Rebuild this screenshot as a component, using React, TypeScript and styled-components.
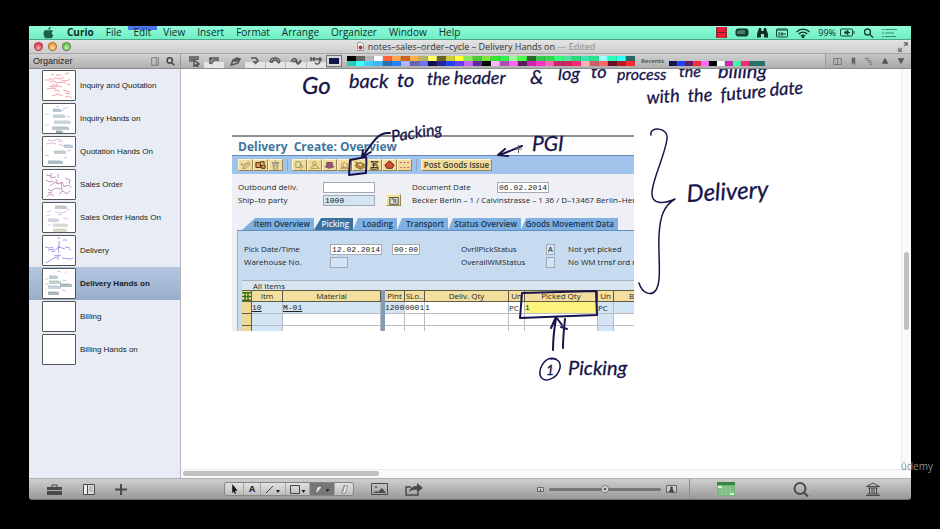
import React from "react";
import styled, { createGlobalStyle } from "styled-components";

const ui = '"Open Sans", "Noto Sans", sans-serif';
const helv = '"Liberation Sans", Arial, sans-serif';
const ink = "#17144a";

const Global = createGlobalStyle`
  * { box-sizing: border-box; }
  html, body, #root { height: 100%; }
  body { margin: 0; background: #000; overflow: hidden; }
  button, input { margin: 0; padding: 0; border: 0; background: none; font: inherit; color: inherit; border-radius: 0; }
  button { display: flex; align-items: center; justify-content: center; }
  svg { display: block; flex: none; }
`;

/* ---------- frame ---------- */

const Page = styled.div`
  position: relative;
  height: 100vh;
  padding: 26px 29px 29px;
  background: #000;
  font-family: ${ui};
`;

const Screen = styled.div`
  display: flex;
  flex-direction: column;
  height: 100%;
  overflow: hidden;
  border-radius: 0 0 3px 3px;
`;

const Watermark = styled.span`
  position: absolute;
  right: 7px;
  bottom: 56px;
  font: 10px/14px ${ui};
  color: #8d8d8d;
`;

/* ---------- menu bar ---------- */

const MenuBar = styled.nav`
  flex: none;
  display: flex;
  align-items: center;
  height: 14px;
  padding: 0 14px;
  background: linear-gradient(#8ffbd8, #70eec4);
  color: #0e3027;
  border-bottom: 1px solid #4ba68a;
`;

const MenuItem = styled.button<{ $bold?: boolean; $active?: boolean }>`
  height: 13px;
  margin-left: ${(p) => (p.$bold ? 7 : 0)}px;
  padding: 0 6px;
  font: ${(p) => (p.$bold ? 700 : 500)} 10px/13px ${ui};
  background: ${(p) => (p.$active ? "linear-gradient(#4b74ef 0 4px, transparent 4px)" : "none")};
`;

const StatusArea = styled.div`
  display: flex;
  align-items: center;
  gap: 8px;
  margin-left: auto;
`;

const Percent = styled.span`
  font: 9px/13px ${ui};
  margin-right: -4px;
`;

/* ---------- title bar ---------- */

const TitleBar = styled.header`
  flex: none;
  display: grid;
  grid-template-columns: 1fr auto 1fr;
  align-items: center;
  height: 13px;
  padding: 0 3px 0 5px;
  background: linear-gradient(#e4e4e4, #cdcdcd);
`;

const Lights = styled.div`
  display: flex;
  gap: 5px;
`;

const Light = styled.button<{ $tone: string }>`
  width: 9px;
  height: 9px;
  border-radius: 50%;
  border: 1px solid rgba(60, 40, 40, 0.45);
  background: radial-gradient(circle at 50% 70%, rgba(255, 255, 255, 0.6), transparent 60%), ${(p) => p.$tone};
`;

const Title = styled.h1`
  display: flex;
  align-items: center;
  gap: 4px;
  margin: 0 0 0 10px;
  font: 500 9px/13px ${ui};
  color: #333;
  white-space: pre;
  span { color: #8e8e8e; }
`;

const Expand = styled.button`
  justify-self: end;
`;

/* ---------- toolbar ---------- */

const Toolbar = styled.div`
  flex: none;
  display: flex;
  height: 16px;
  background: linear-gradient(#d2d2d2, #b0b0b0);
  border-top: 1px solid #a8a8a8;
  border-bottom: 1px solid #8c8c8c;
`;

const OrganizerHead = styled.div`
  display: flex;
  align-items: center;
  gap: 7px;
  width: 152px;
  padding: 0 5px 0 4px;
  border-right: 1px solid #999;
  font: 9px/14px ${helv};
  color: #222;
  span { margin-right: auto; }
`;

const Tools = styled.div`
  display: flex;
  align-items: center;
  gap: 1px;
  padding-left: 3px;
  width: 145px;
`;

const Tool = styled.button<{ $lit?: boolean }>`
  flex: 1;
  height: 14px;
  background: ${(p) => (p.$lit ? "linear-gradient(transparent 8px, #e4e4e4 8px)" : "none")};
`;

const ColorWell = styled.button`
  align-self: center;
  width: 16px;
  height: 12px;
  border: 1px solid #777;
  background: #14144f;
  box-shadow: inset 0 0 0 2px #d8d8d8;
`;

const Palette = styled.div<{ $cols: number; $cell: number; $rows: number }>`
  display: grid;
  grid-template-columns: repeat(${(p) => p.$cols}, ${(p) => p.$cell}px);
  grid-auto-rows: 5px;
  align-self: ${(p) => (p.$rows === 2 ? "center" : "end")};
  margin: 0 0 ${(p) => (p.$rows === 2 ? 0 : 2)}px 5px;
`;

const Swatch = styled.button<{ $c: string }>`
  background: ${(p) => p.$c};
  box-shadow: inset -1px 0 rgba(80, 80, 80, 0.2);
`;

const Recents = styled.span`
  align-self: center;
  margin-left: 6px;
  font: 600 6px/8px ${ui};
  color: #444;
`;

const ViewTools = styled.div`
  display: flex;
  align-items: center;
  justify-content: space-around;
  width: 86px;
  margin-left: auto;
  padding: 0 2px 0 3px;
  border-left: 1px solid #989898;
  background: linear-gradient(#c4c4c4, #a8a8a8);
`;

/* ---------- body ---------- */

const Body = styled.div`
  flex: 1;
  min-height: 0;
  display: flex;
`;

const Sidebar = styled.ul`
  flex: none;
  width: 152px;
  margin: 0;
  padding: 0;
  list-style: none;
  background: #e8edf5;
  border-right: 1px solid #b4b8be;
  overflow: hidden;
`;

const SideRow = styled.button<{ $on?: boolean }>`
  width: 100%;
  height: 33px;
  justify-content: flex-start;
  gap: 4px;
  padding-left: 13px;
  font: ${(p) => (p.$on ? 700 : 400)} 8px/12px ${helv};
  color: #191b20;
  background: ${(p) => (p.$on ? "linear-gradient(#b3c7df, #97aecb)" : "none")};
`;

const Thumb = styled.svg`
  width: 34px;
  height: 31px;
  border: 1px solid #555;
  border-radius: 1px;
  background: #fff;
`;

const Board = styled.main`
  flex: 1;
  min-width: 0;
  display: grid;
  grid-template-columns: 1fr 10px;
  grid-template-rows: 1fr 9px;
  background: #fff;
`;

const Canvas = styled.div`
  position: relative;
  overflow: hidden;
`;

const InkLayer = styled.svg`
  position: absolute;
  left: 0;
  top: 0;
`;

const InkText = styled.text<{ $size: number }>`
  font: italic 400 ${(p) => p.$size}px Lato, sans-serif;
  fill: ${ink};
  stroke: ${ink};
  stroke-width: 0.3px;
`;

const VTrack = styled.div`
  border-left: 1px solid #ececec;
  padding: 183px 2px 0;
  background: #fafafa;
`;

const HTrack = styled.div`
  grid-column: 1 / -1;
  border-top: 1px solid #ececec;
  padding: 1px 2px 0;
  background: #fafafa;
`;

const ScrollThumb = styled.div<{ $across?: boolean }>`
  width: ${(p) => (p.$across ? "27%" : "5px")};
  height: ${(p) => (p.$across ? 5 : 78)}px;
  border-radius: 3px;
  background: #c0c0c0;
`;

/* ---------- delivery form ---------- */

const Sap = styled.section`
  position: absolute;
  left: 51px;
  top: 66px;
  width: 402px;
  height: 196px;
  overflow: hidden;
  border-top: 2px solid #8d9095;
  background: #eef0f6;
  font: 500 8px/12px ${ui};
  color: #1c1f26;
`;

const SapTitle = styled.h2`
  margin: 0;
  padding: 0 6px;
  height: 19px;
  background: #fdfdfe;
  border-bottom: 1px solid #6489b2;
  font: 700 12px/19px ${ui};
  color: #41759f;
  white-space: pre;
`;

const SapBar = styled.div`
  display: flex;
  align-items: center;
  height: 18px;
  padding-left: 6px;
  background: #a1c4ec;
`;

const SapGroup = styled.div`
  display: flex;
  padding-right: 4px;
  margin-right: 4px;
  border-right: 1px solid #86a5c8;
`;

const SapButton = styled.button`
  width: 15px;
  height: 12px;
  border: 1px solid;
  border-color: #fff3c9 #94845a #94845a #fff3c9;
  background: #f1dc9a;
`;

const PostButton = styled(SapButton)`
  width: 71px;
  font-weight: 600;
  line-height: 10px;
  color: #3d3b30;
  white-space: nowrap;
`;

const FormGrid = styled.div<{ $cols: string; $pad: string }>`
  display: grid;
  grid-template-columns: ${(p) => p.$cols};
  grid-auto-rows: 12px;
  row-gap: 1px;
  align-items: center;
  padding: ${(p) => p.$pad};
  white-space: nowrap;
`;

const Field = styled.input<{ $w: number; $plain?: boolean }>`
  width: ${(p) => p.$w}px;
  height: 11px;
  padding: 0 1px;
  border: 1px solid #a2abb5;
  background: ${(p) => (p.$plain ? "#d3e5f4" : "#fff")};
  font: 400 8px/9px "Liberation Mono", monospace;
  color: #222;
`;

const Rest = styled.span`
  grid-column: 4 / -1;
`;

const Tabs = styled.div`
  display: flex;
  height: 12px;
  margin-top: 12px;
  padding-left: 10px;
`;

const Tab = styled.button<{ $w: number; $on?: boolean; $slant: number }>`
  flex: none;
  width: ${(p) => p.$w}px;
  height: 12px;
  justify-content: flex-end;
  padding-right: 4px;
  font: 600 8px/12px ${ui};
  white-space: nowrap;
  color: ${(p) => (p.$on ? "#e8f1fa" : "#1c3450")};
  background: ${(p) => (p.$on ? "#3d719f" : "#7eb1e2")};
  clip-path: polygon(${(p) => p.$slant}px 0, 100% 0, 100% 100%, 0 100%);
`;

const TabPanel = styled.div`
  margin-left: 5px;
  height: 101px;
  border-top: 1px solid #5f8fbe;
  border-left: 1px solid #8fb4d8;
  background: #c6daf0;
`;

const Caption = styled.div`
  margin: 12px 0 0 4px;
  padding-left: 11px;
  height: 10px;
  border-top: 1px solid #9fb3c4;
  background: #d8e5f0;
  line-height: 9px;
`;

const Items = styled.table`
  margin-left: 4px;
  width: 408px;
  table-layout: fixed;
  border-collapse: separate;
  border-spacing: 0;
  background: #fff;
  th, td { padding: 0; overflow: hidden; white-space: nowrap; }
  td { height: 12px; }
`;

const Head = styled.th`
  height: 12px;
  border: 1px solid #5e5a48;
  border-left-width: 0;
  background: #f3de9e;
  font: 500 8px/10px ${ui};
  text-align: center;
`;

const Rail = styled.td`
  background: #7f9cba;
`;

const Cell = styled.td<{ $tone?: "blue" | "yellow" | "pick" }>`
  border-right: 1px solid #b9bdc2;
  border-bottom: 1px solid #b9bdc2;
  font: 400 8px/11px "Liberation Mono", monospace;
  color: #222;
  background: ${(p) => ({ blue: "#d3e5f5", yellow: "#fdf37c", pick: "#efd88f", none: "#fff" })[p.$tone ?? "none"]};
  a { color: inherit; }
`;

const PickCell = styled(Cell)`
  border-right-color: #5e5a48;
  border-bottom-color: #5e5a48;
`;

const Unit = styled(Cell)`
  font: 500 8px/11px ${ui};
`;

/* ---------- footer ---------- */

const Footer = styled.footer`
  flex: none;
  display: flex;
  align-items: center;
  height: 22px;
  background: linear-gradient(#cfcfcf, #989898);
  border-top: 1px solid #b0b0b0;
  border-bottom: 1px solid #6d7478;
  color: #4a4a4a;
`;

const FootLeft = styled.div`
  display: flex;
  align-items: center;
  justify-content: space-between;
  width: 98px;
  padding-left: 18px;
`;

const Segments = styled.div`
  display: flex;
  height: 14px;
  margin-left: 97px;
  border: 1px solid #858585;
  border-radius: 3px;
  background: linear-gradient(#e2e2e2, #bcbcbc);
  overflow: hidden;
`;

const Segment = styled.button<{ $w: number; $on?: boolean }>`
  width: ${(p) => p.$w}px;
  font: 700 9px/12px ${ui};
  color: #222;
  border-right: 1px solid #a5a5a5;
  background: ${(p) => (p.$on ? "#777" : "none")};
  &:last-child { border-right: 0; }
`;

const FootButton = styled.button`
  margin-left: 17px;
`;

const Zoom = styled.label`
  display: flex;
  align-items: center;
  gap: 5px;
  margin-left: auto;
  padding-right: 12px;
`;

const Range = styled.input`
  appearance: none;
  width: 112px;
  height: 8px;
  &::-webkit-slider-runnable-track { height: 3px; border-radius: 2px; background: #767676; }
  &::-webkit-slider-thumb {
    appearance: none; width: 8px; height: 8px; margin-top: -3px; border-radius: 50%;
    background: radial-gradient(circle, #555 0 1px, #f2f2f2 2px); border: 1px solid #777;
  }
`;

const FootRight = styled.div`
  display: flex;
  align-items: center;
  justify-content: space-between;
  align-self: stretch;
  width: 222px;
  padding: 0 31px 0 27px;
  border-left: 1px solid #8f8f8f;
`;

/* ---------- data ---------- */

const menus = ["File", "Edit", "View", "Insert", "Format", "Arrange", "Organizer", "Window", "Help"];

const palette =
  "000 666 b5b5b5 fff ff6238 ffa64d cc6626 ffb347 b3b36b ffff66 66662b cccc33 ffff33 8ce65c 4dcc33 7de645 33e633 33f04d a0f5a0 4dff4d 2b662b 33cc4d 33d94d 33ff7d 4de69c 26d97d 33e6b3 26e68c 99ffff 26ffc0 33ffff 26665f 2bccb3 40ffff 40ccff 40b3ff 2673b3 2680ff b3b3ff 6666b3 7070f8 101050 262699 2040ff 6640ff c466ff 6626a6 000 ffb3ff b34db3 ff66ff 5c1a5c cc26b3 ff33cc ff66b3 cc2666 cc265c ff2673 ffb3b3 cc5c66 ff6666 661020 b81a26 ff2633".split(" ");
const recent = "14144f 2040ff 661a66 ff2640 ff66ff 000 fff cc26b3 33ffa6 ff2673 267366 267366".split(" ");

type Mark = [number, number, number, string];
const pages: { name: string; kind: string }[] = [
  { name: "Inquiry and Quotation", kind: "red" },
  { name: "Inquiry Hands on", kind: "shots" },
  { name: "Quotation Hands On", kind: "shots2" },
  { name: "Sales Order", kind: "plum" },
  { name: "Sales Order Hands On", kind: "shots3" },
  { name: "Delivery", kind: "violet" },
  { name: "Delivery Hands on", kind: "shots4" },
  { name: "Billing", kind: "" },
  { name: "Billing Hands on", kind: "" },
];

const blocks: Record<string, Mark[]> = {
  shots: [[10, 5, 8, "#9db4c5"], [10, 11, 12, "#b4c4cc"], [11, 17, 17, "#b9cbd2"], [9, 23, 17, "#a5b6c0"], [13, 27, 7, "#8895a0"]],
  shots2: [[21, 8, 9, "#a7b8cc"], [11, 14, 12, "#b0bfca"], [5, 24, 15, "#96a8b4"]],
  shots3: [[12, 3, 12, "#b4bbb8"], [5, 16, 11, "#c5c8d4"], [10, 21, 15, "#ccd3cc"], [10, 26, 14, "#cfcfb8"]],
  shots4: [[6, 7, 9, "#a4bccc"], [6, 12, 12, "#a9c6b9"], [5, 17, 13, "#b3c4cf"], [17, 15, 12, "#92a8b0"], [5, 23, 11, "#8da0b0"]],
};

const scrawl: Record<string, [string, string]> = {
  red: ["#f58a97", "M2 9h5M6 7l3 2 3-2 5 1 4-2M8 4l3-1M13 4h5M22 3l4-1M7 11l4-1 3 2 4-1 5 1M6 15l5 1 4-1 4 1M18 9l6 1 3-2M4 18l6-1 3 1M11 20l4-1 2 2M20 19l4 1 3 1M9 25l6-2 5 2M22 22l5 1M22 26l4-1 3 2M9 14h6M24 13l3 1"],
  plum: ["#b67ab2", "M3 5l5 1M8 3v5l5-1M15 4v4M3 10l4 2 3-1M7 16l5-4 3 2M13 9l2 5 4-2 2 4M5 19l3 2 5-3M18 12l1 9M20 17l6-2 2 3M4 26l4-2 3 2M16 24l4-3 4 3M22 8l5 2-1 4M23 24l4-3M5 23l4-1M13 18l5 1"],
  violet: ["#8b83e4", "M14 2h3M16 5v7M20 4h4M2 11l4 1 4-1M5 14l6-1M11 15l5-4 6 2M15 10l1 7M22 11l5 1M26 13l2 1M11 20l4-1 3 1M15 19v5M3 27l8-5 4-1M19 22l8 1 3-1M8 15l4 1"],
  shots: ["#c3bde0", "M2 10h4M20 5l5-2M2 21h4M18 7l3-1M13 2l3 1M23 12l4 1"],
  shots2: ["#d6a8cd", "M5 3l5 1 4-2 6 2M3 7l6-1 4 1M16 7l5 2M2 18l4 1M24 14l4-1M21 21l3-1M15 5l3-1"],
  shots3: ["#d4b6dc", "M4 9l4-1M12 9l7 1 5-2M3 13l4-1M20 15l5 1M5 22h3M15 12l4-1M24 6l3 1"],
  shots4: ["#c4b9d0", "M14 2l4 1M2 10h3M2 15h3M19 11l5 1M19 21l4 1M22 4l2-2M2 21l2-1"],
};

const tabs: [string, number, number][] = [
  ["Item Overview", 72, 13],
  ["Picking", 39, 7],
  ["Loading", 44, 5],
  ["Transport", 51, 5],
  ["Status Overview", 73, 5],
  ["Goods Movement Data", 97, 5],
];

const ThumbArt = ({ kind }: { kind: string }) => (
  <Thumb viewBox="0 0 32 29" aria-hidden="true">
    {(blocks[kind] ?? []).map(([x, y, w, c], i) => (
      <g key={i}>
        <rect x={x} y={y} width={w} height={3} fill={c} opacity=".75" />
        <path d={`M${x} ${y}h${w - 2}`} stroke={c} strokeWidth=".8" />
      </g>
    ))}
    {scrawl[kind] && <path d={scrawl[kind][1]} fill="none" stroke={scrawl[kind][0]} strokeWidth=".8" />}
  </Thumb>
);

/* Small outline icon on a 12-unit grid */
const Icon = ({ d, w = 10, h = 10, fill = "none", stroke = "currentColor", sw = 1 }: { d: string; w?: number; h?: number; fill?: string; stroke?: string; sw?: number }) => (
  <svg width={w} height={h} viewBox="0 0 12 12" preserveAspectRatio="none" fill={fill} stroke={stroke} strokeWidth={sw} aria-hidden="true">
    <path d={d} />
  </svg>
);

const toolIcons: [string, string, boolean][] = [
  ["Select", "M1 2h10M1 4h10M1 6h4M6 5l5 4-2 .5 1 2-1 .5-1-2-2 1z", false],
  ["Line style", "M2 9V3h9M3 9l3-4h5M2 3l2 2", true],
  ["Pen", "M2 10l2-5 4-2 3 1-2 4-3 1zM4 6h5M5 5h5", false],
  ["Note", "M2 3h5l2 3-3 3M4 7h4", true],
  ["Rotate", "M1 7a5 4 0 0 1 10 0M3 8a3 3 0 0 1 6 0M1 7h2M9 8l2-1", true],
  ["Curve", "M1 7c3-6 6-3 6 0s2 2 4-1M3 7l2-1 3 3 3-4", true],
  ["Connect", "M1 2v4M1 4h9M4 2v4M10 3v3c0 3-3 4-5 2M8 5l2-2 2 2", true],
];

const sapIcons: { d: string; c: string; fill?: string }[] = [
  { d: "M1 4l3 2 6-4M3 10l6-6 2 1-5 5zM1 5l3 3", c: "#9c8c61" },
  { d: "M1 3h5v6H1zM7 6h4v4H7zM6 2h4v3", c: "#33281f", fill: "#ec9230" },
  { d: "M3 4h6l-1 7H4zM2 3h8M5 1h2M5 5v4M7 5v4", c: "#8b8b83" },
  { d: "M2 2h5v7H2zM6 6l4 2-3 3M8 4v3", c: "#8e966a" },
  { d: "M6 2a2 2 0 1 1 0 4a2 2 0 1 1 0-4M2 10l3-4h3l3 4z", c: "#a6904f" },
  { d: "M3 7V3h6v4M1 8l5 2 5-2-5-2z", c: "#4e5277", fill: "#bc4763" },
  { d: "M3 9V5l3-2 3 2v4zM1 10h10M5 6v3", c: "#b7876c" },
  { d: "M2 5l5-2 4 2v4l-4 2-5-3zM2 5l5 3 4-3M1 2l4 2", c: "#6d642f", fill: "#d58b31" },
  { d: "M2 2h8l-2 2H5zM3 6h6M2 9h8v2H2zM5 4v5M9 6v2", c: "#24241e" },
  { d: "M6 1l5 5-2 4H3L1 6z", c: "#51221c", fill: "#d84b2f" },
  { d: "M1 3h2M5 3h2M9 3h2M1 9h2M5 9h2M9 9h2", c: "#bd486d" },
];

/* ---------- app ---------- */

export default function App() {
  return (
    <Page>
      <Global />
      <Screen>
        <MenuBar>
          <svg width="11" height="12" viewBox="0 0 11 12" fill="#205e4c" aria-hidden="true">
            <path d="M7.6 0C6 .3 5.200 1.300 5.300 2.800 6.900 2.800 7.700 1.600 7.600 0zM5.500 3.500C4.500 3.500 4 3 3 3.100 1.200 3.300.4 4.800.5 6.700c.1 2 1.500 4.700 2.800 4.700.8 0 1.200-.5 2.200-.5s1.400.5 2.200.5c1.200 0 2.200-1.800 2.600-3.100C8.400 7.500 8.200 4.900 10 4c-1.400-1.500-3.400-.9-4.500-.5z" />
          </svg>
          <MenuItem $bold>Curio</MenuItem>
          {menus.map((m) => (
            <MenuItem key={m} $active={m === "Edit"}>{m}</MenuItem>
          ))}
          <StatusArea>
            <svg width="11" height="11" viewBox="0 0 11 11" aria-hidden="true">
              <path fill="#75202b" d="M0 0h11v11H0z" /><path fill="#ee1f37" d="M2 0h7v5H2zM2 6h7v5H2z" />
              <path stroke="#d06070" strokeDasharray="1 1" d="M1 0v11M10 0v11" />
            </svg>
            <svg width="14" height="9" viewBox="0 0 14 9" aria-hidden="true">
              <rect x="1" y="1" width="12" height="7" rx="2" fill="#16443a" stroke="#102f28" />
              <path stroke="#7ed9bc" d="M4 3h6M4 5h6M3 3v3" strokeWidth=".8" />
            </svg>
            <svg width="11" height="10" viewBox="0 0 11 10" fill="#102f28" aria-hidden="true">
              <path d="M2 0h2l.6 3h1.800L7 0h2l2 6v3.500H7V6H4v3.500H0V6z" />
            </svg>
            <svg width="12" height="10" viewBox="0 0 12 10" fill="none" stroke="#16443a" aria-hidden="true">
              <rect x=".5" y="1" width="11" height="8" rx="1" /><path d="M0 2h12M3 4v4M5 5h2v2H5zM9 5v2" />
            </svg>
            <svg width="14" height="10" viewBox="0 0 14 10" fill="none" stroke="#102f28" strokeWidth="1.300" aria-hidden="true">
              <path d="M.5 4C4 .2 10 .2 13.500 4M2.700 6C5.200 3.500 8.800 3.500 11.300 6M4.900 8C6 6.800 8 6.800 9.100 8" /><circle cx="7" cy="9" r=".6" />
            </svg>
            <Percent>99%</Percent>
            <svg width="15" height="9" viewBox="0 0 15 9" fill="none" stroke="#16443a" aria-hidden="true">
              <rect x=".5" y="1" width="12" height="7" rx="1" /><path d="M14 3v3" /><path fill="#16443a" d="M8 2.500v4L4 4.500zM8 4.500h2" />
            </svg>
            <svg width="11" height="10" viewBox="0 0 11 10" fill="none" stroke="#16443a" strokeWidth="1.400" aria-hidden="true">
              <circle cx="4.500" cy="4" r="3" /><path d="M7 6.500l3 3" />
            </svg>
            <svg width="15" height="10" viewBox="0 0 15 10" fill="none" stroke="#3d8c75" strokeWidth="1.200" aria-hidden="true">
              <path d="M0 1.500h2M3 1.500h12M0 5h2M3 5h9M0 8.500h2M3 8.500h11" />
            </svg>
          </StatusArea>
        </MenuBar>

        <TitleBar>
          <Lights>
            <Light aria-label="Close" $tone="#ea4455" />
            <Light aria-label="Minimize" $tone="#f2a73a" />
            <Light aria-label="Zoom window" $tone="#6fca57" />
          </Lights>
          <Title>
            <svg width="7" height="9" viewBox="0 0 7 9" aria-hidden="true">
              <path d="M.5.5h4l2 2v6h-6z" fill="#f3f3f3" stroke="#999" /><circle cx="3.500" cy="5.500" r="2" fill="#ab3833" />
            </svg>
            <div>notes–sales–order–cycle – Delivery Hands on <span>— Edited</span></div>
          </Title>
          <Expand aria-label="Full screen"><Icon d="M7 1h4v4M11 1L7 5M1 7v4h4M1 11l4-4" stroke="#666" w={10} h={10} sw={1.4} /></Expand>
        </TitleBar>

        <Toolbar>
          <OrganizerHead>
            <span>Organizer</span>
            <button aria-label="Show panel"><Icon d="M1 1h10v10H1zM8 1v10" w={8} h={9} stroke="#666" /></button>
            <button aria-label="Search pages"><Icon d="M5 1a3.500 3.500 0 1 1 0 7a3.500 3.500 0 1 1 0-7M8 8l3 3" w={9} h={9} stroke="#444" sw={2} /></button>
          </OrganizerHead>
          <Tools>
            {toolIcons.map(([n, d, lit]) => (
              <Tool key={n} aria-label={n} $lit={lit}><Icon d={d} w={12} h={12} stroke="#555" sw={1.5} /></Tool>
            ))}
          </Tools>
          <ColorWell aria-label="Pen color" />
          <Palette $cols={32} $cell={9} $rows={2}>
            {palette.map((c, i) => <Swatch key={i} aria-label={`Color ${i + 1}`} $c={`#${c}`} />)}
          </Palette>
          <Recents>Recents</Recents>
          <Palette $cols={12} $cell={8} $rows={1}>
            {recent.map((c, i) => <Swatch key={i} aria-label={`Recent color ${i + 1}`} $c={`#${c}`} />)}
          </Palette>
          <ViewTools>
            <button aria-label="Split view"><Icon d="M1 2h10v8H1zM6 2v8" w={9} h={9} stroke="#666" /></button>
            <button aria-label="Bookmark"><Icon d="M3 1h6v10L6 8l-3 3z" w={7} h={9} fill="#666" stroke="none" /></button>
            <button aria-label="Outline"><Icon d="M1 2h5M3 5h6M6 8h5M7 11h4" w={9} h={8} stroke="#777" sw={1.5} /></button>
            <button aria-label="Previous page"><Icon d="M6 1l5 9H1z" w={8} h={8} fill="#555" stroke="none" /></button>
            <button aria-label="Next page"><Icon d="M1 2h10l-5 9z" w={8} h={8} fill="#555" stroke="none" /></button>
          </ViewTools>
        </Toolbar>

        <Body>
          <Sidebar>
            {pages.map((p) => (
              <li key={p.name}>
                <SideRow $on={p.name === "Delivery Hands on"}><ThumbArt kind={p.kind} />{p.name}</SideRow>
              </li>
            ))}
          </Sidebar>

          <Board>
            <Canvas>
              <Sap>
                <SapTitle>Delivery  Create: Overview</SapTitle>
                <SapBar>
                  <SapGroup>
                    {sapIcons.slice(0, 3).map((s, i) => (
                      <SapButton key={i} aria-label={`Header action ${i + 1}`}><Icon d={s.d} stroke={s.c} fill={s.fill} w={11} h={10} /></SapButton>
                    ))}
                  </SapGroup>
                  <SapGroup>
                    {sapIcons.slice(3).map((s, i) => (
                      <SapButton key={i} aria-label={`Item action ${i + 1}`}><Icon d={s.d} stroke={s.c} fill={s.fill} w={11} h={10} /></SapButton>
                    ))}
                  </SapGroup>
                  <PostButton>Post Goods Issue</PostButton>
                </SapBar>
                <FormGrid $cols="85px 63px 26px 85px 1fr" $pad="7px 0 0 6px">
                  <label htmlFor="outbound">Outbound deliv.</label>
                  <Field id="outbound" $w={52} />
                  <span />
                  <label htmlFor="docdate">Document Date</label>
                  <Field id="docdate" $w={52} defaultValue="06.02.2014" />
                  <label htmlFor="shipto">Ship–to party</label>
                  <Field id="shipto" $w={52} $plain defaultValue="1000" />
                  <SapButton aria-label="Partner details"><Icon d="M1 2h10v9H1zM3 4h3v5M8 4v5" w={10} h={9} stroke="#333" fill="#dce0d4" /></SapButton>
                  <Rest>Becker Berlin – 1 / Calvinstrasse – 1 36 / D–13467 Berlin–Her</Rest>
                </FormGrid>
                <Tabs>
                  {tabs.map(([name, w, slant]) => <Tab key={name} $w={w} $slant={slant} $on={name === "Picking"}>{name}</Tab>)}
                </Tabs>
                <TabPanel>
                  <FormGrid $cols="86px 62px 69px 85px 22px 1fr" $pad="12px 0 0 6px">
                    <label htmlFor="pickdate">Pick Date/Time</label>
                    <Field id="pickdate" $w={52} defaultValue="12.02.2014" />
                    <Field aria-label="Pick time" $w={28} defaultValue="00:00" />
                    <label htmlFor="pickst">OvrllPickStatus</label>
                    <Field id="pickst" $w={9} $plain defaultValue="A" />
                    <span>Not yet picked</span>
                    <label htmlFor="wh">Warehouse No.</label>
                    <Field id="wh" $w={18} $plain />
                    <span />
                    <label htmlFor="wmst">OverallWMStatus</label>
                    <Field id="wmst" $w={9} $plain />
                    <span>No WM trnsf ord re</span>
                  </FormGrid>
                  <Caption>All Items</Caption>
                  <Items>
                    <colgroup>
                      {[10, 31, 98, 4, 20, 20, 84, 16, 73, 16, 36].map((w, i) => <col key={i} width={w} />)}
                    </colgroup>
                    <thead>
                      <tr>
                        <Head aria-label="Select all"><Icon d="M0 1h12M0 6h12M0 11h12M4 0v12M8 0v12" w={9} h={9} stroke="#39721f" fill="none" sw={2} /></Head>
                        <Head>Itm</Head>
                        <Head>Material</Head>
                        <Rail />
                        <Head>Plnt</Head>
                        <Head>SLo..</Head>
                        <Head>Deliv. Qty</Head>
                        <Head>Un</Head>
                        <Head>Picked Qty</Head>
                        <Head>Un</Head>
                        <Head>B</Head>
                      </tr>
                    </thead>
                    <tbody>
                      <tr>
                        <PickCell $tone="pick" />
                        <Cell $tone="blue"><a href="#item">10</a></Cell>
                        <Cell $tone="blue"><a href="#material">M-01</a></Cell>
                        <Rail />
                        <Cell $tone="blue">1200</Cell>
                        <Cell>0001</Cell>
                        <Cell>1</Cell>
                        <Unit>PC</Unit>
                        <Cell $tone="yellow">1</Cell>
                        <Unit $tone="blue">PC</Unit>
                        <Cell $tone="blue" />
                      </tr>
                      {[0, 1].map((r) => (
                        <tr key={r}>
                          <PickCell $tone="pick" />
                          <Cell $tone="blue" />
                          <Cell />
                          <Rail />
                          <Cell /><Cell /><Cell /><Cell /><Cell />
                          <Cell $tone="blue" />
                          <Cell />
                        </tr>
                      ))}
                    </tbody>
                  </Items>
                </TabPanel>
              </Sap>

              <InkLayer width="720" height="400" viewBox="181 69 720 400">
                <InkText x="302" y="94" $size={24}>Go</InkText>
                <InkText x="349" y="88" $size={20}>back</InkText>
                <InkText x="397" y="87" $size={20}>to</InkText>
                <InkText x="427" y="85" $size={17}>the</InkText>
                <InkText x="454" y="84" $size={18}>header</InkText>
                <InkText x="530" y="84" $size={20}>&amp;</InkText>
                <InkText x="558" y="80" $size={18}>log</InkText>
                <InkText x="591" y="78" $size={18}>to</InkText>
                <InkText x="617" y="80" $size={16}>process</InkText>
                <InkText x="679" y="77" $size={16}>the</InkText>
                <InkText x="718" y="78" $size={20}>billing</InkText>
                <InkText $size={18} transform="translate(647 104) rotate(-4)">with</InkText>
                <InkText $size={18} transform="translate(688 102) rotate(-3)">the</InkText>
                <InkText $size={18} transform="translate(721 101) rotate(-5)">future</InkText>
                <InkText $size={18} transform="translate(770 96) rotate(-4)">date</InkText>
                <InkText $size={16} transform="translate(392 142) rotate(-9)">Packing</InkText>
                <InkText x="532" y="151" $size={21}>PGI</InkText>
                <InkText $size={24} transform="translate(687 202) rotate(-3)">Delivery</InkText>
                <InkText x="568" y="375" $size={20}>Picking</InkText>
                <InkText x="546" y="375" $size={14}>1</InkText>
                <g fill="none" stroke={ink} strokeWidth="2" strokeLinecap="round" strokeLinejoin="round">
                  <path strokeWidth="1.500" d="M651 135C649 126 669 127 667 139C665 155 653 178 652 192C651 205 664 204 675 199C663 206 660 218 659 235C658 256 662 281 656 290C651 297 642 293 639 283" />
                  <path d="M390 133C380 132 376 137 363 156M363 150L362 157L371 152" />
                  <path d="M350 160L366 157C367 162 366 169 366 173L349 175Z" />
                  <path d="M522 146L500 155M505 149L498 155L508 156" />
                  <path d="M522 293L596 291L597 315L520 318Z" />
                  <path d="M553 350C553 340 554 330 556 318M551 328L556 317L562 325M563 348C563 338 564 328 565 319M561 327L567 329" />
                  <path strokeWidth="1.500" d="M556 359C546 355 539 367 540 375C542 384 557 380 560 368C561 361 556 358 551 359" />
                </g>
                <path stroke="#666" fill="none" d="M515 149h7M518.500 145v8" />
              </InkLayer>
            </Canvas>
            <VTrack><ScrollThumb /></VTrack>
            <HTrack><ScrollThumb $across /></HTrack>
          </Board>
        </Body>

        <Footer>
          <FootLeft>
            <button aria-label="Shelf">
              <svg width="15" height="11" viewBox="0 0 15 11" fill="currentColor"><path d="M0 3h15v3H0zM0 7h15v4H0z" /><path d="M5 3V1h5v2" fill="none" stroke="currentColor" /></svg>
            </button>
            <button aria-label="Sidebar">
              <svg width="12" height="11" viewBox="0 0 12 11" fill="#ddd" stroke="currentColor"><path d="M.5.5h11v10H.5z" /><path fill="#eee" d="M.5.5h4v10h-4z" /><path d="M6 3h4M6 5h4M6 7h4" strokeWidth=".4" /></svg>
            </button>
            <button aria-label="Add"><Icon d="M6 0v12M0 6h12" w={12} h={11} sw={2} /></button>
          </FootLeft>
          <Segments>
            <Segment aria-label="Pointer" $w={19}><Icon d="M3 0l7 8H6.500l1.500 3-1.500 1-1.500-3-2 2z" fill="#111" stroke="none" w={9} /></Segment>
            <Segment $w={17}>A</Segment>
            <Segment aria-label="Line" $w={25}><svg width="16" height="9" viewBox="0 0 16 9"><path d="M1 8l7-7" stroke="#444" /><path d="M11 5h4l-2 3z" fill="#222" /></svg></Segment>
            <Segment aria-label="Shape" $w={24}><svg width="16" height="9" viewBox="0 0 16 9"><path d="M.5.5h9v8h-9z" stroke="#444" fill="none" /><path d="M11.500 5h4l-2 3z" fill="#222" /></svg></Segment>
            <Segment aria-label="Pen" $w={25} $on><svg width="16" height="9" viewBox="0 0 16 9"><path d="M1 9l2-7 3-1 2 1-3 4z" fill="#ddd" stroke="#444" strokeWidth=".6" /><path d="M11.500 4h4l-2 3z" fill="#222" /></svg></Segment>
            <Segment aria-label="Eraser" $w={18}><Icon d="M2 11l3-10h5l-3 10zM6 1L4 9" stroke="#777" fill="#eee" w={9} h={9} /></Segment>
          </Segments>
          <FootButton aria-label="Picture">
            <svg width="17" height="12" viewBox="0 0 17 12" fill="none" stroke="currentColor"><path d="M.5.5h16v11H.5z" /><path d="M2 10l3-2 2 1 4-4 4 5z" fill="currentColor" stroke="none" /><circle cx="5" cy="4" r="1" fill="currentColor" stroke="none" /></svg>
          </FootButton>
          <FootButton aria-label="Share">
            <svg width="19" height="13" viewBox="0 0 19 13" fill="none" stroke="currentColor" strokeWidth="1.500"><path d="M6 4H1v8h12V9" /><path d="M4 9c1-5 5-6 8-6V0l6 5-6 4.500V7C9 6.500 6 7 4 9z" fill="currentColor" stroke="none" /></svg>
          </FootButton>
          <Zoom>
            <svg width="7" height="5" viewBox="0 0 7 5"><path d="M.5.500h6v4h-6z" fill="#ccc" stroke="#666" /><path d="M3 2h1v2H3z" fill="#444" /></svg>
            <Range type="range" aria-label="Zoom level" min={0} max={100} defaultValue={50} />
            <svg width="11" height="8" viewBox="0 0 11 8"><path d="M.5.500h10v7H.5z" fill="#ccc" stroke="#666" /><path d="M5.500 1.500a1.500 1.500 0 0 1 1 2.500l2 3h-6l2-3a1.500 1.500 0 0 1 1-2.500z" fill="#444" /></svg>
          </Zoom>
          <FootRight>
            <button aria-label="Planner">
              <svg width="18" height="14" viewBox="0 0 18 14"><path fill="#74b878" d="M0 0h18v14H0z" /><path fill="#3a8448" d="M0 0h18v3H0z" /><path stroke="#a9d6aa" strokeWidth=".6" d="M1 6h16M1 9h16M1 12h11M5 4v9M9 4v9M13 4v9" /><path fill="#ddeedc" d="M1 4h4v2H1zM13 11h4v2h-4z" /></svg>
            </button>
            <button aria-label="Search">
              <svg width="16" height="15" viewBox="0 0 16 15" fill="none" stroke="currentColor" strokeWidth="2"><circle cx="7" cy="6.500" r="5.500" /><path d="M11 10.500l4 4" /></svg>
            </button>
            <button aria-label="Library">
              <svg width="14" height="14" viewBox="0 0 14 14" fill="none" stroke="currentColor"><path d="M.5 4.500L7 1l6.500 3.500zM2 6h10M3.500 6v6M6 6v6M8 6v6M10.500 6v6M1 12h12M0 13.500h14" /></svg>
            </button>
          </FootRight>
        </Footer>
      </Screen>
      <Watermark>ûdemy</Watermark>
    </Page>
  );
}
